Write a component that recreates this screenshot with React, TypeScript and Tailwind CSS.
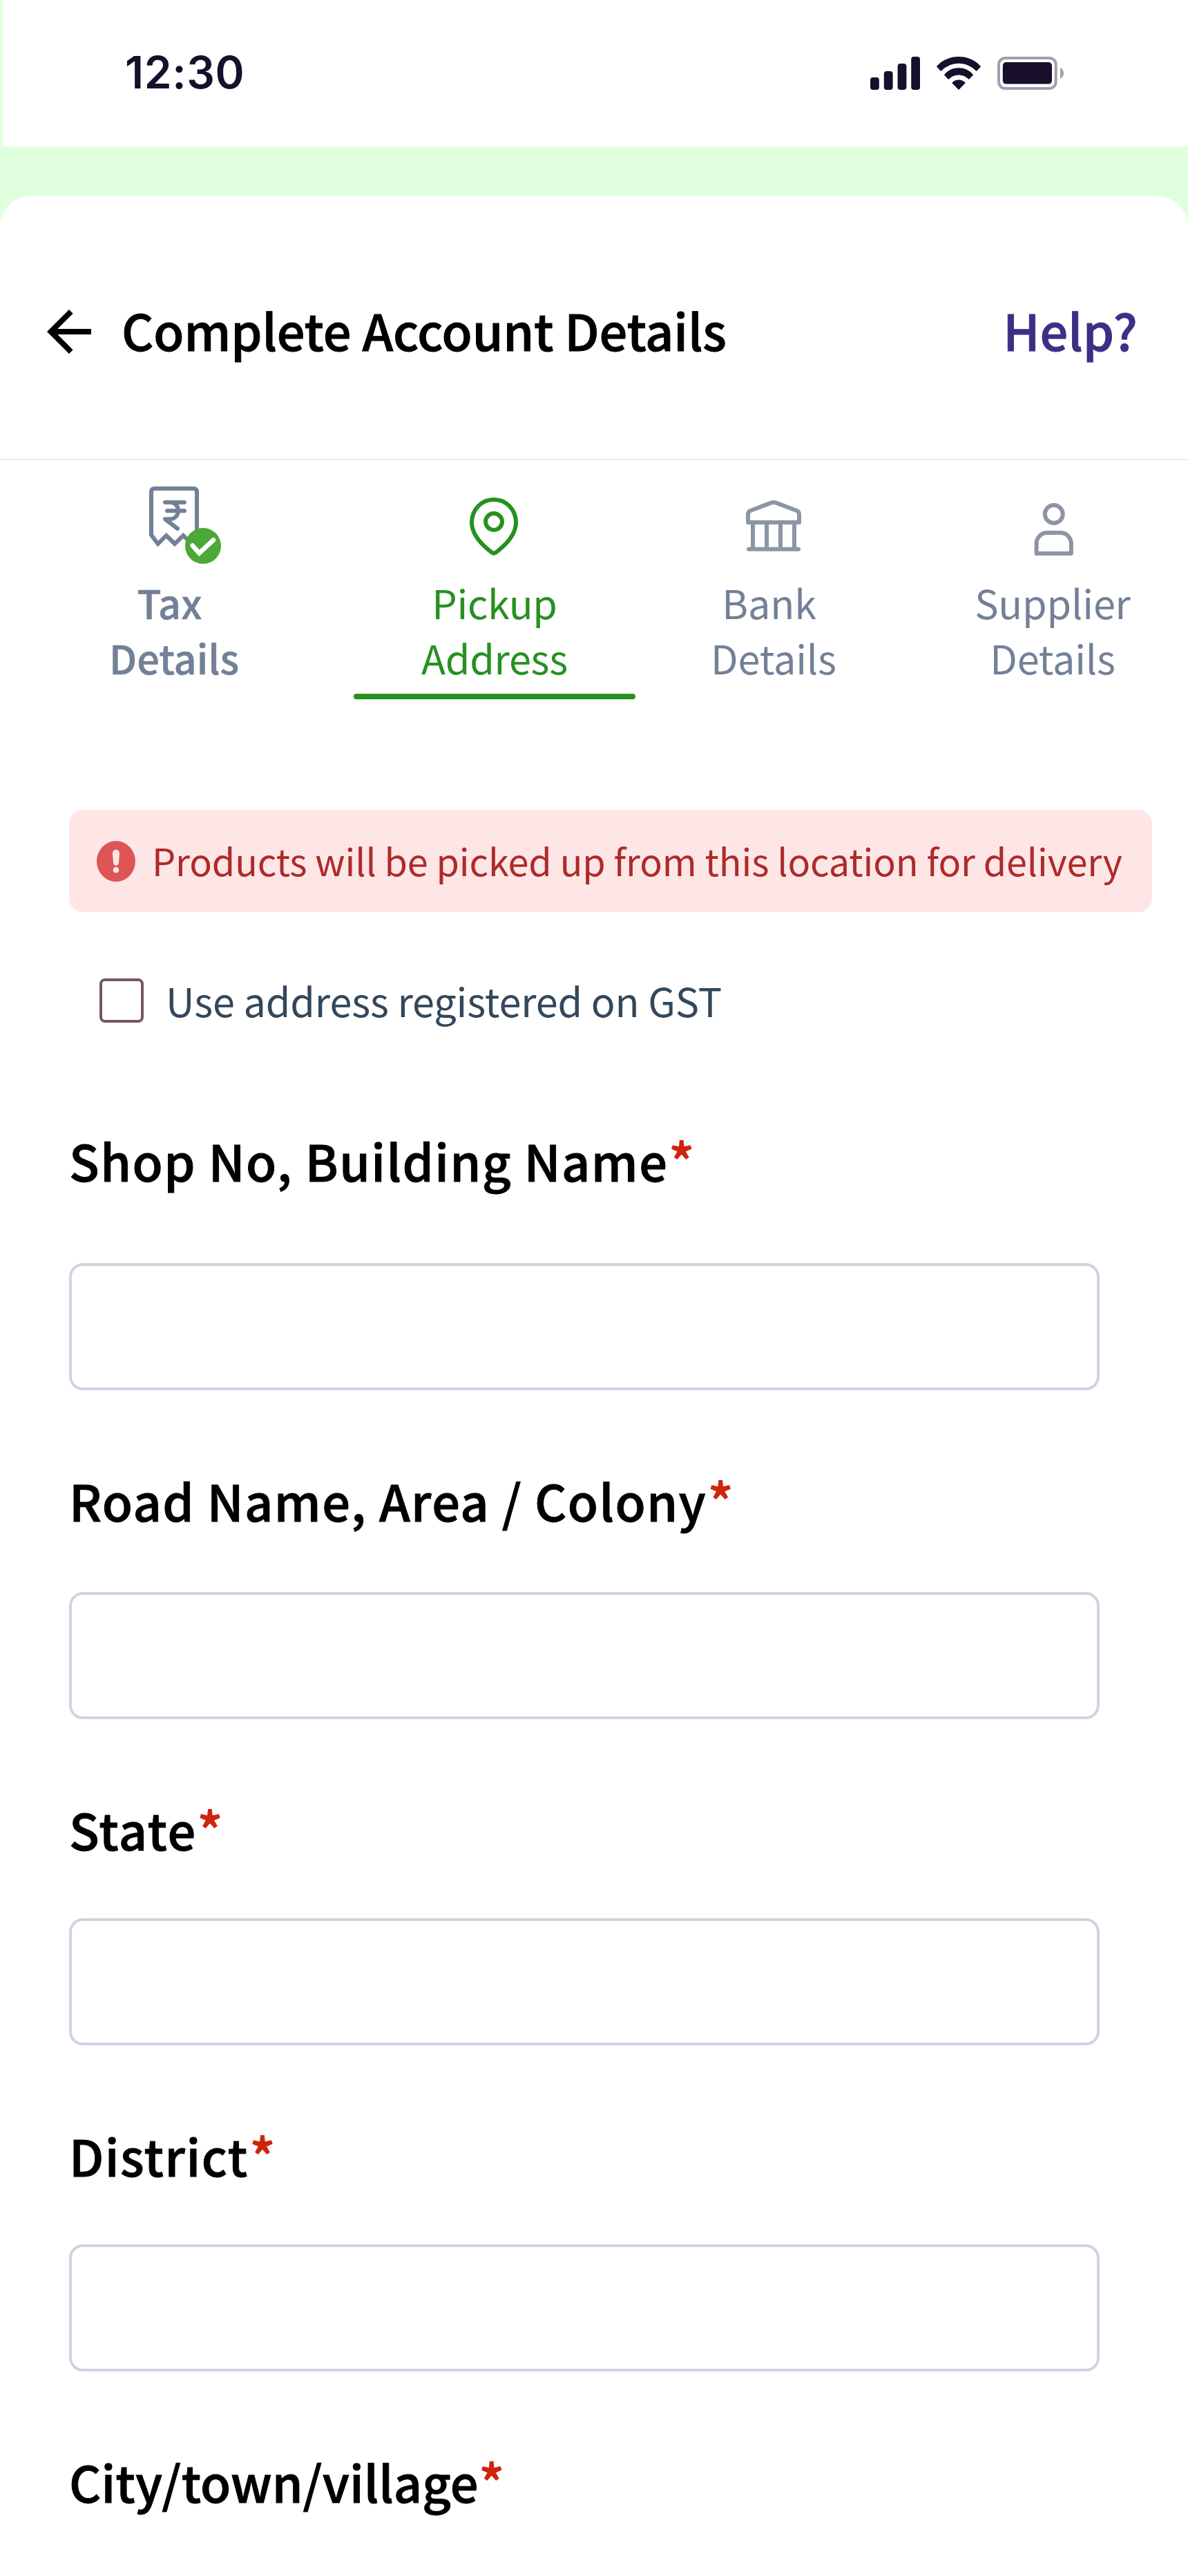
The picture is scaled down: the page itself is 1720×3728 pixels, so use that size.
import React from "react";

type TabProps = {
  lines: [string, string];
  className: string;
  textClass: string;
  active?: boolean;
  children: React.ReactNode;
};

function SignalIcon() {
  return (
    <svg width="72" height="48" viewBox="0 0 72 48" fill="#170f2b">
      <rect x="0" y="30" width="12.8" height="18" rx="4" />
      <rect x="19.8" y="21" width="12.8" height="27" rx="4" />
      <rect x="39.6" y="10" width="12.8" height="38" rx="4" />
      <rect x="59.2" y="0" width="12.8" height="48" rx="4" />
    </svg>
  );
}

function WifiIcon() {
  return (
    <svg width="64" height="48" viewBox="0 0 64 48" fill="#170f2b" stroke="#170f2b" strokeWidth="1.6" strokeLinejoin="round">
      <path d="M0.9 14.2 A43 43 0 0 1 63.1 14.2 L57.7 20 A35.2 35.2 0 0 0 6.3 20 Z" />
      <path d="M11.9 26.2 A26.6 26.6 0 0 1 52.1 26.2 L46.8 31.9 A20.6 20.6 0 0 0 17.2 31.9 Z" />
      <path d="M23.2 38 A12.4 12.4 0 0 1 40.8 38 L32 47 Z" />
    </svg>
  );
}

function BatteryIcon() {
  return (
    <svg width="96" height="48" viewBox="0 0 96 48">
      <rect x="2" y="2" width="82.7" height="44" rx="9.5" fill="none" stroke="#a29faa" strokeWidth="4" />
      <rect x="7.8" y="8" width="71.2" height="31.6" rx="5" fill="#170f2b" />
      <path d="M91 16 C94 17.5 96 20.5 96 24 C96 27.5 94 30.5 91 32 Z" fill="#a29faa" />
    </svg>
  );
}

function BackArrow() {
  return (
    <svg className="mt-[6px] shrink-0" width="96" height="96" viewBox="0 0 24 24" fill="#000">
      <path d="M20 11H7.83l5.59-5.59L12 4l-8 8 8 8 1.41-1.41L7.83 13H20v-2z" />
    </svg>
  );
}

function TaxIcon() {
  return (
    <svg width="144" height="120" viewBox="0 0 144 120" fill="none" stroke="#728197" strokeWidth="6">
      <path d="M39 76.3 V14 Q39 9 44 9 H100 Q105 9 105 14 V79 L97.5 89 L85.3 77 L73 89 L60.7 77 L48.7 89 Z" />
      <g strokeLinecap="round" strokeLinejoin="round">
        <path d="M59 29 H87" />
        <path d="M62 41.3 H87" />
        <path d="M67 29 C74 29 78 35 78 41 C78 48 73 53.3 66 53.3 H59 L77 67" />
      </g>
      <circle cx="114" cy="92" r="26" fill="#4ca838" stroke="none" />
      <path d="M98.7 91.5 L108.4 102.5 L129 83.5" stroke="#fff" strokeWidth="6.6" strokeLinecap="round" strokeLinejoin="miter" />
    </svg>
  );
}

function PinIcon() {
  return (
    <svg width="144" height="120" viewBox="0 0 144 120" fill="none" stroke="#269120" strokeWidth="6">
      <path d="M39 58 C39 39.5 53 25 71 25 S103 39.5 103 58 C103 76 88 91 73.5 101.8 Q71 103.5 68.5 101.8 C54 91 39 76 39 58 Z" />
      <circle cx="71" cy="57" r="12" />
    </svg>
  );
}

function BankIcon() {
  return (
    <svg width="144" height="120" viewBox="0 0 144 120" fill="none" stroke="#8d95a5" strokeWidth="6" strokeLinejoin="round">
      <path d="M35 58 V46.5 Q35 42.7 38.5 41 L68.5 29.6 Q72 28.4 75.5 29.6 L105.5 41 Q109 42.7 109 46.5 V58 Z" />
      <path d="M42 58 V96 M62 58 V96 M82 58 V96 M102 58 V96" />
      <path d="M36 96.7 H108" strokeLinecap="round" />
    </svg>
  );
}

function PersonIcon() {
  return (
    <svg width="144" height="120" viewBox="0 0 144 120" fill="none" stroke="#8d95a5" strokeWidth="6" strokeLinejoin="round">
      <circle cx="73.8" cy="46" r="13" />
      <path d="M48.6 103 V88.5 A15.5 15.5 0 0 1 64.1 73 H83.4 A15.5 15.5 0 0 1 98.9 88.5 V103 Z" />
    </svg>
  );
}

function AlertIcon() {
  return (
    <svg className="mt-3 shrink-0" width="56" height="59" viewBox="0 0 56 59">
      <ellipse cx="28" cy="29.5" rx="28" ry="29.5" fill="#dd5555" />
      <path d="M23 18 C23 11 33 11 33 18 L32 31.5 C31.6 37 24.4 37 24 31.5 Z" fill="#ffe6e6" />
      <circle cx="28" cy="42" r="4.3" fill="#ffe6e6" />
    </svg>
  );
}

function Tab({ lines, className, textClass, active, children }: TabProps) {
  return (
    <div className={`flex flex-col items-center pt-8 ${className}`}>
      {children}
      <div className={`mt-[13px] text-center text-[57.6px] leading-[80px] whitespace-pre ${textClass}`}>
        <div>{lines[0]}</div>
        <div>{lines[1]}</div>
      </div>
      {active && <div className="mt-[13px] h-2 w-full rounded-full bg-[#269120]" />}
    </div>
  );
}

const fields = [
  { label: "Shop No, Building Name", tracking: "tracking-[1.48px]", gap: "mt-[99px]", star: "ml-px" },
  { label: "Road Name, Area / Colony", tracking: "tracking-[1.43px]", gap: "mt-[83px]", star: "ml-[2px]" },
  { label: "State", tracking: "tracking-[1.6px]", gap: "mt-[79px]", star: "ml-px" },
  { label: "District", tracking: "tracking-[1.5px]", gap: "mt-[79px]", star: "ml-[2px]" },
  { label: "City/town/village", tracking: "tracking-[0.04px]", gap: "", star: "ml-px" },
];

export default function App() {
  return (
    <div className="flex h-[3728px] w-[1720px] flex-col overflow-hidden bg-[#e0ffde] font-['Noto_Sans_CJK_SC',sans-serif] text-black">
      <header className="ml-1 flex h-[212px] shrink-0 justify-between bg-white pr-[180px] pl-[177px]">
        <div className="mt-[66px] font-['Inter',sans-serif] text-[64px] leading-[77px] font-semibold tracking-[0.6px] text-[#170f2b]">12:30</div>
        <div className="mt-[82px] flex h-12 gap-6">
          <SignalIcon />
          <WifiIcon />
          <BatteryIcon />
        </div>
      </header>

      <main className="mt-[72px] flex-1 rounded-t-[44px] bg-white">
        <div className="flex h-[382px] items-start border-b-2 border-[#e8edec] pt-[142px] pr-[73px] pl-[52px] text-[72px] leading-[101px] font-medium [-webkit-text-stroke-width:0.9px]">
          <BackArrow />
          <h1 className="ml-7 tracking-[-0.14px]">Complete Account Details</h1>
          <a className="ml-auto text-[#3d2f84]">Help?</a>
        </div>

        <nav className="flex h-[346px] items-start">
          <Tab lines={["Tax ", "Details"]} className="w-[504px]" textClass="font-medium text-[#728197] [-webkit-text-stroke-width:0.5px]">
            <TaxIcon />
          </Tab>
          <Tab lines={["Pickup", "Address"]} className="ml-2 w-[408px]" textClass="text-[#269120] tracking-[-0.3px]" active>
            <PinIcon />
          </Tab>
          <Tab lines={["Bank ", "Details"]} className="w-[400px]" textClass="text-[#728197] tracking-[-0.15px]">
            <BankIcon />
          </Tab>
          <Tab lines={["Supplier", "Details"]} className="ml-2 w-[392px]" textClass="text-[#728197] tracking-[-0.2px]">
            <PersonIcon />
          </Tab>
        </nav>

        <div className="mx-[100px] mt-[160px] flex h-[148px] w-[1568px] items-start rounded-[20px] bg-[#ffe6e6] pt-[33px] pl-10">
          <AlertIcon />
          <p className="ml-6 text-[54px] leading-[79px] tracking-[-0.14px] whitespace-nowrap text-[#ae2a2a]">
            Products will be picked up from this location for delivery
          </p>
        </div>

        <label className="mt-[87px] ml-[144px] flex items-start">
          <span className="mt-[9px] size-16 shrink-0 rounded-[8px] border-4 border-[#765759]" />
          <span className="ml-8 text-[57.6px] leading-[80px] tracking-[-0.15px] text-[#33475b]">Use address registered on GST</span>
        </label>

        <form className="mt-[141px] ml-[100px] flex w-[1492px] flex-col gap-[108px]">
          {fields.map((f) => (
            <div key={f.label} className="flex flex-col">
              <div className="flex text-[72px] leading-[101px] font-medium whitespace-pre">
                <span className={`[-webkit-text-stroke-width:0.9px] ${f.tracking}`}>{f.label}</span>
                <span className={`relative -top-0.5 font-bold text-[#d0240c] ${f.star}`}>*</span>
              </div>
              {f.gap && <div className={`h-[184px] rounded-[20px] border-4 border-[#cdd5e1] ${f.gap}`} />}
            </div>
          ))}
        </form>
      </main>
    </div>
  );
}
